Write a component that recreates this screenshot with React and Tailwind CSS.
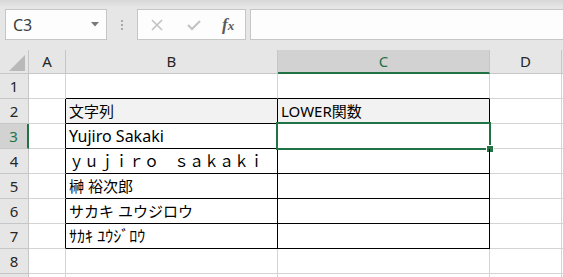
import React from "react";

const CELL_FONT = { fontFamily: '"Noto Sans", "Noto Sans CJK JP", sans-serif' };
const HEAD_FONT = { fontFamily: '"Noto Sans", "Liberation Sans", sans-serif' };

function Toolbar() {
  return (
    <div className="h-[50px] bg-[#e6e6e6] relative">
      <div className="absolute left-0 top-0 right-0 h-[7px] bg-gradient-to-b from-[#d8d8d8] to-[#e6e6e6]" />
      <div className="relative flex items-start pt-[9px] pl-[5px] gap-0">
        <div className="w-[102px] h-[31px] bg-[#fdfdfd] border border-[#c6c6c6] flex items-center justify-between pl-[7px] pr-[7px]">
          <span className="text-[16px] text-[#3c3c3c]" style={HEAD_FONT}>C3</span>
          <svg width="8" height="5" viewBox="0 0 8 5"><polygon points="0,0 8,0 4,4.5" fill="#787878" /></svg>
        </div>
        <div className="w-[30px] h-[31px] flex flex-col items-center justify-center gap-[2px]">
          <div className="w-[2px] h-[2px] bg-[#a8a8a8]" />
          <div className="w-[2px] h-[2px] bg-[#a8a8a8]" />
          <div className="w-[2px] h-[2px] bg-[#a8a8a8]" />
        </div>
        <div className="w-[109px] h-[31px] bg-[#fdfdfd] border border-[#c6c6c6] flex items-center pl-[12px]">
          <svg width="12" height="12" viewBox="0 0 12 12" className="ml-[1px]"><path d="M1 1 L11 11 M11 1 L1 11" stroke="#c2c2c2" strokeWidth="1.6" /></svg>
          <svg width="14" height="12" viewBox="0 0 14 12" className="ml-[24px]"><path d="M1 6 L5 10 L13 2" stroke="#c2c2c2" strokeWidth="2" fill="none" /></svg>
          <span className="ml-[21px] text-[17px] italic font-bold text-[#5a5a5a] leading-none" style={{ fontFamily: '"Liberation Serif", serif' }}>
            f<span className="text-[13px]">x</span>
          </span>
        </div>
        <div className="ml-[4px] flex-1 h-[31px] bg-[#fdfdfd] border border-[#c6c6c6] border-r-0" />
      </div>
    </div>
  );
}

const rows = [
  { n: 1, b: "", c: "", table: false },
  { n: 2, b: "文字列", c: "LOWER関数", table: true, head: true },
  { n: 3, b: "Yujiro Sakaki", c: "", table: true, sel: true, big: true },
  { n: 4, b: "ｙｕｊｉｒｏ　ｓａｋａｋｉ", c: "", table: true },
  { n: 5, b: "榊 裕次郎", c: "", table: true },
  { n: 6, b: "サカキ ユウジロウ", c: "", table: true },
  { n: 7, b: "ｻｶｷ ﾕｳｼﾞﾛｳ", c: "", table: true, big: true },
  { n: 8, b: "", c: "", table: false },
  { n: 9, b: "", c: "", table: false, hideNum: true },
];

function App() {
  return (
    <div className="w-[563px] h-[277px] overflow-hidden bg-white">
      <Toolbar />
      <div className="grid grid-cols-[29px_37px_212px_212px_72px_1fr] grid-rows-[24px_repeat(9,25px)]">
        <div className="bg-[#e6e6e6] border-r border-b border-[#c6c6c6] relative">
          <svg className="absolute left-[8px] top-[4px]" width="18" height="18" viewBox="0 0 18 18">
            <polygon points="17,1 17,17 1,17" fill="#b9b9b9" />
          </svg>
        </div>
        <div className="bg-[#e6e6e6] border-r border-b border-[#c6c6c6] flex items-center justify-center text-[15px] text-[#262626]" style={HEAD_FONT}>A</div>
        <div className="bg-[#e6e6e6] border-r border-b border-[#c6c6c6] flex items-center justify-center text-[15px] text-[#262626]" style={HEAD_FONT}>B</div>
        <div className="bg-[#d2d2d2] border-r border-[#c6c6c6] border-b-2 border-b-[#217346] flex items-center justify-center text-[15px] text-[#217346]" style={HEAD_FONT}>C</div>
        <div className="bg-[#e6e6e6] border-r border-b border-[#c6c6c6] flex items-center justify-center text-[15px] text-[#262626]" style={HEAD_FONT}>D</div>
        <div className="bg-[#e6e6e6] border-b border-[#c6c6c6]" />

        {rows.map((r) => {
          const next = rows.find((x) => x.n === r.n + 1);
          const bottomBlack = r.table || (next && next.table);
          return (
            <React.Fragment key={r.n}>
              <div
                className={
                  r.sel
                    ? "bg-[#d2d2d2] border-r-2 border-r-[#217346] border-b border-b-[#c6c6c6] flex items-center justify-center text-[15px] text-[#217346]"
                    : "bg-[#e6e6e6] border-r border-b border-[#c6c6c6] flex items-center justify-center text-[15px] text-[#262626]"
                }
                style={HEAD_FONT}
              >
                {r.hideNum ? "" : r.n}
              </div>
              <div className={r.table ? "border-r border-r-black border-b border-b-[#d4d4d4]" : "border-r border-b border-[#d4d4d4]"} />
              <div
                className={
                  (r.table ? "border-r border-r-black " : "border-r border-r-[#d4d4d4] ") +
                  (bottomBlack ? "border-b border-b-black " : "border-b border-b-[#d4d4d4] ") +
                  (r.head ? "bg-[#f2f2f2] " : "") +
                  (r.big ? "text-[16px] " : "text-[15px] ") +
                  "flex items-end pl-[3px] pb-[1px] text-black leading-[22px] whitespace-pre overflow-hidden"
                }
                style={CELL_FONT}
              >
                {r.b}
              </div>
              <div
                className={
                  (r.table ? "border-r border-r-black " : "border-r border-r-[#d4d4d4] ") +
                  (bottomBlack ? "border-b border-b-black " : "border-b border-b-[#d4d4d4] ") +
                  (r.head ? "bg-[#f2f2f2] " : "") +
                  "relative flex items-end pl-[3px] pb-[1px] text-[15px] text-black leading-[22px] whitespace-pre"
                }
                style={CELL_FONT}
              >
                {r.c}
                {r.sel && (
                  <>
                    <div className="absolute left-[-2px] top-[-2px] right-[-2px] bottom-[-2px] border-2 border-[#217346]" />
                    <div className="absolute right-[-4px] bottom-[-4px] w-[6px] h-[6px] bg-[#217346] outline outline-1 outline-white" />
                  </>
                )}
              </div>
              <div className="border-r border-b border-[#d4d4d4]" />
              <div className="border-b border-[#d4d4d4]" />
            </React.Fragment>
          );
        })}
      </div>
    </div>
  );
}

export default App;
